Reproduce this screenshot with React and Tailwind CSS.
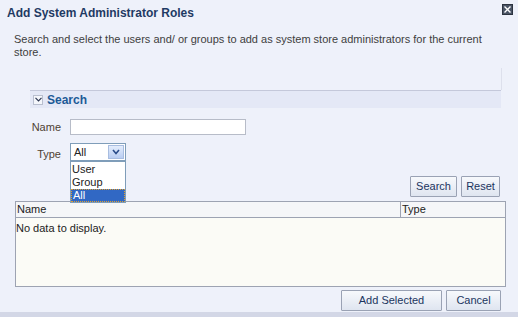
export default function App() {
  const font = "font-['Liberation_Sans',Arial,sans-serif]";
  const btn =
    "flex items-center justify-center border border-[#9aa2b4] bg-gradient-to-b from-[#f7f9fc] to-[#dfe5f0] text-[#1b355e] text-[11px] rounded-[1px]";
  return (
    <div className={`w-[518px] h-[317px] bg-[#eef1fa] overflow-hidden flex flex-col ${font}`}>
      {/* Title bar */}
      <div className="flex items-start justify-between h-[26px] pl-[7px] pr-[5px] pt-[6px]">
        <div className="text-[12px] font-bold text-[#1f3a63] leading-[14px]">Add System Administrator Roles</div>
        <div className="w-[11px] h-[11px] mt-[-2px] bg-[#4a5465] border border-[#2d3440] flex items-center justify-center">
          <svg width="7" height="7" viewBox="0 0 7 7">
            <path d="M0.5 0.5 L6.5 6.5 M6.5 0.5 L0.5 6.5" stroke="#ffffff" strokeWidth="1.4" />
          </svg>
        </div>
      </div>
      {/* Description */}
      <div className="mt-[7px] pl-[14px] pr-[20px] text-[11px] leading-[13px] text-[#404040]">
        Search and select the users and/ or groups to add as system store administrators for the current store.
      </div>
      {/* spacer with faint line */}
      <div className="h-[31px] flex">
        <div className="flex-1"></div>
        <div className="w-[17px] border-l border-[#dde0ec] mt-[9px]"></div>
      </div>
      {/* Search header */}
      <div className="ml-[30px] mr-[17px] h-[18px] border-t border-[#c4c8da] bg-[#e4e8f6] flex items-center gap-[4px] pl-[3px]">
        <div className="w-[10px] h-[10px] border border-[#b9bfcf] bg-[#f4f6fb] flex items-center justify-center">
          <svg width="7" height="5" viewBox="0 0 7 5">
            <path d="M0.5 0.8 L3.5 3.8 L6.5 0.8" stroke="#2b3550" strokeWidth="1.2" fill="none" />
          </svg>
        </div>
        <span className="text-[12px] font-bold text-[#1d5a96] leading-[14px]">Search</span>
      </div>
      {/* Form */}
      <div className="relative z-10 flex flex-col gap-[8px] mt-[11px]">
        <div className="flex items-center h-[16px]">
          <div className="w-[70px] pr-[9px] text-right text-[11px] text-[#4e4232]">Name</div>
          <div className="w-[176px] h-[16px] bg-white border border-[#b7bcc8]"></div>
        </div>
        <div className="flex items-start">
          <div className="w-[70px] pr-[9px] text-right text-[11px] text-[#4e4232] mt-[3px]">Type</div>
          <div className="flex flex-col w-[56px]">
            <div className="h-[18px] bg-white border border-[#7f9db9] flex items-center justify-between pl-[3px] pr-[1px]">
              <span className="text-[11px] text-[#222]">All</span>
              <div className="w-[16px] h-[14px] bg-gradient-to-b from-[#e4edfc] to-[#b9cdf2] border border-[#a8bde0] flex items-center justify-center">
                <svg width="8" height="6" viewBox="0 0 8 6">
                  <path d="M1 1 L4 4.5 L7 1" stroke="#2a4c8a" strokeWidth="1.6" fill="none" />
                </svg>
              </div>
            </div>
            <div className="bg-white border border-[#7f9db9] flex flex-col text-[11px] leading-[13px] pt-[1px]">
              <div className="pl-[1px] text-[#222]">User</div>
              <div className="pl-[1px] text-[#222]">Group</div>
              <div className="pl-[1px] leading-[11px] text-white bg-[#3168c4] border border-dotted border-[#e0a030]">All</div>
            </div>
          </div>
          <div className="flex-1 flex justify-end gap-[4px] pr-[18px] mt-[33px]">
            <div className={`${btn} w-[47px] h-[21px]`}>Search</div>
            <div className={`${btn} w-[39px] h-[21px]`}>Reset</div>
          </div>
        </div>
      </div>
      {/* Table */}
      <div className="ml-[15px] mr-[12px] mt-[-2px] h-[86px] border border-[#9da3b2] bg-[#fbfbf6] flex flex-col">
        <div className="flex h-[16px] border-b border-[#9da3b2] bg-[#f5f6f8] text-[11px] text-[#222] leading-[15px]">
          <div className="w-[385px] border-r border-[#9da3b2] pl-[1px]">Name</div>
          <div className="flex-1 pl-[1px]">Type</div>
        </div>
        <div className="text-[11px] text-[#222] pt-[4px] leading-[13px]">No data to display.</div>
      </div>
      {/* Footer */}
      <div className="flex justify-end gap-[4px] pr-[17px] mt-[3px]">
        <div className={`${btn} w-[101px] h-[21px]`}>Add Selected</div>
        <div className={`${btn} w-[55px] h-[21px]`}>Cancel</div>
      </div>
      <div className="flex-1"></div>
      <div className="h-[5px] bg-[#d3d7e6]"></div>
    </div>
  );
}
